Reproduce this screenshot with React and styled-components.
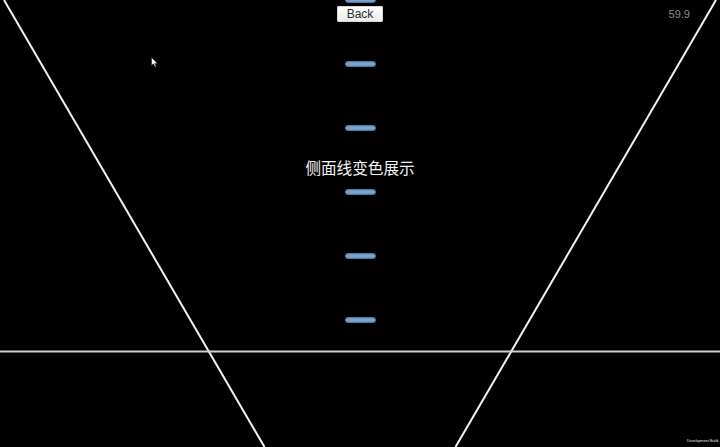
import React from 'react';
import styled, { createGlobalStyle } from 'styled-components';

const GlobalStyle = createGlobalStyle`
    html, body {
        margin: 0;
        padding: 0;
        background: #000;
    }
    body {
        font-family: "Liberation Sans", Arial, sans-serif;
    }
`

const Stage = styled.div`
    position: relative;
    width: 720px;
    height: 447px;
    background: #000;
    overflow: hidden;
`

const Road = styled.svg`
    position: absolute;
    inset: 0;
    width: 720px;
    height: 447px;
`

const Lane = styled.div`
    position: absolute;
    inset: -3px 0 0 0;
    display: flex;
    flex-direction: column;
    align-items: center;
    gap: 58px;
`

const Dash = styled.div`
    width: 31px;
    height: 6px;
    box-sizing: border-box;
    border-radius: 3px;
    border: 1px solid #4d7aa6;
    background: linear-gradient(#6690bd, #82acd5 50%, #6690bd);
`

const Hud = styled.div`
    position: absolute;
    inset: 0;
    display: flex;
    flex-direction: column;
`

const TopBar = styled.div`
    display: grid;
    grid-template-columns: 1fr auto 1fr;
    align-items: center;
    padding-top: 6px;
`

const BackButton = styled.button`
    grid-column: 2;
    width: 46px;
    height: 16px;
    padding: 0;
    border: 1px solid #d8d8d8;
    border-radius: 1px;
    background: linear-gradient(#ffffff, #ececec);
    color: #2a2a2a;
    font-family: "Liberation Sans", Arial, sans-serif;
    font-size: 12px;
    line-height: 14px;
`

const Fps = styled.span`
    justify-self: end;
    padding-right: 30px;
    color: #8c8c8c;
    font-size: 11px;
    line-height: 14px;
`

const Title = styled.div`
    margin-top: 135px;
    text-align: center;
    color: #f4f4f4;
    font-family: "Noto Sans CJK SC", "Noto Sans", sans-serif;
    font-size: 15.6px;
    line-height: 20px;
`

const Cursor = styled.svg`
    position: absolute;
    top: 57px;
    left: 151px;
`

const BuildTag = styled.span`
    margin-top: auto;
    align-self: flex-end;
    padding: 0 2px 4px 0;
    color: #e8e8e8;
    font-size: 3.7px;
    line-height: 4px;
    white-space: nowrap;
`

const dashes = [0, 1, 2, 3, 4, 5];

export default function App() {
    return (
        <Stage>
            <GlobalStyle />
            <Road viewBox="0 0 720 447">
                <line x1="4" y1="0" x2="264.5" y2="447" stroke="#f2f2f2" strokeWidth="2" />
                <line x1="716" y1="0" x2="455.5" y2="447" stroke="#f2f2f2" strokeWidth="2" />
                <line x1="0" y1="351.5" x2="720" y2="351.5" stroke="#cfcfcf" strokeWidth="2" />
            </Road>

            <Lane>
                {dashes.map(i => <Dash key={i} />)}
            </Lane>

            <Hud>
                <TopBar>
                    <BackButton>Back</BackButton>
                    <Fps>59.9</Fps>
                </TopBar>
                <Title>侧面线变色展示</Title>
                <BuildTag>Development Build</BuildTag>
            </Hud>

            <Cursor width="8" height="11" viewBox="0 0 8 11">
                <path d="M0.5 0.5 L0.5 8.5 L2.5 6.8 L4 10 L5.2 9.4 L3.8 6.4 L6.5 6.4 Z" fill="#fff" stroke="#222" strokeWidth="0.6" />
            </Cursor>
        </Stage>
    );
}
